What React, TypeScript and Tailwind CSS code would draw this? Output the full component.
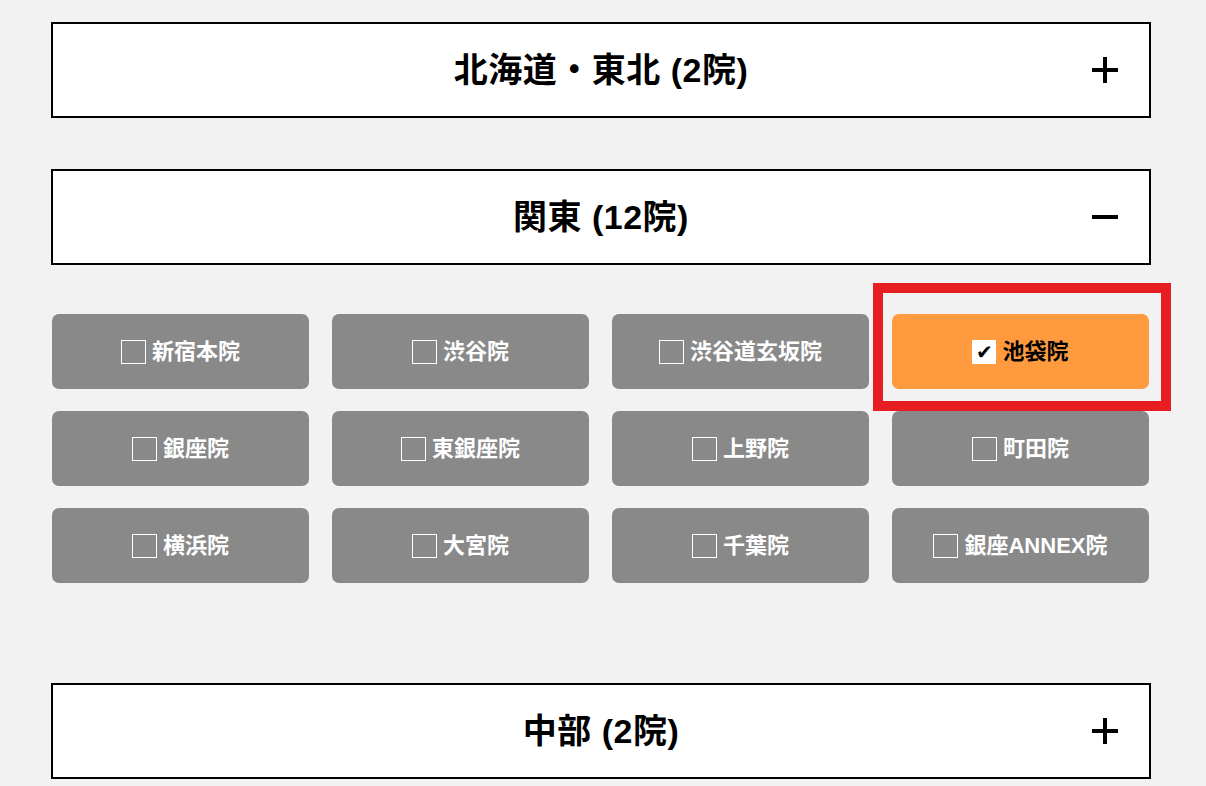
import React from "react";

type Region = {
  id: string;
  title: string;
  open: boolean;
  clinics: string[];
};

const regions: Region[] = [
  { id: "hokkaido", title: "北海道・東北 (2院)", open: false, clinics: [] },
  {
    id: "kanto",
    title: "関東 (12院)",
    open: true,
    clinics: [
      "新宿本院",
      "渋谷院",
      "渋谷道玄坂院",
      "池袋院",
      "銀座院",
      "東銀座院",
      "上野院",
      "町田院",
      "横浜院",
      "大宮院",
      "千葉院",
      "銀座ANNEX院",
    ],
  },
  { id: "chubu", title: "中部 (2院)", open: false, clinics: [] },
];

const FONT = { fontFamily: '"Liberation Sans", "Noto Sans CJK JP", sans-serif' };

function ToggleIcon({ open }: { open: boolean }) {
  return (
    <svg width="26" height="26" viewBox="0 0 26 26" className="justify-self-end mr-[31px]">
      <rect x="0" y="11" width="26" height="4" fill="#000" />
      {!open && <rect x="11" y="0" width="4" height="26" fill="#000" />}
    </svg>
  );
}

function ClinicButton({ name, checked }: { name: string; checked: boolean }) {
  return (
    <div className="relative">
      <button
        className={
          checked
            ? "w-full h-[75px] rounded-[7px] bg-[#ff9a3e] flex items-center justify-center gap-[6px] text-black"
            : "w-full h-[75px] rounded-[7px] bg-[#898989] flex items-center justify-center gap-[6px] text-white"
        }
      >
        {checked ? (
          <span className="w-[24px] h-[24px] bg-white flex items-center justify-center">
            <span className="text-[20px] leading-none text-black" style={{ fontFamily: '"DejaVu Sans", sans-serif' }}>
              ✔
            </span>
          </span>
        ) : (
          <span className="w-[25px] h-[24px] border border-white" />
        )}
        <span className="text-[22px] font-bold leading-none" style={FONT}>
          {name}
        </span>
      </button>
      {checked && (
        <div className="absolute -left-[19px] -top-[31px] w-[298px] h-[128px] border-[10px] border-[#e61e21] pointer-events-none" />
      )}
    </div>
  );
}

export default function App() {
  return (
    <div className="min-h-[786px] bg-[#f2f2f2] pt-[22px]">
      <div className="w-[1100px] ml-[51px] flex flex-col">
        {regions.map((region, i) => (
          <div key={region.id} className={i > 0 ? (region.open ? "mt-[51px]" : "mt-[100px]") : ""}>
            <div className="h-[96px] bg-white border-2 border-black grid grid-cols-[1fr_auto_1fr] items-center">
              <div />
              <h2 className="text-[34px] font-bold text-black tracking-[0.5px] leading-none" style={FONT}>
                {region.title}
              </h2>
              <ToggleIcon open={region.open} />
            </div>
            {region.open && (
              <div className="mt-[49px] ml-px w-[1097px] grid grid-cols-4 gap-x-[23px] gap-y-[22px]">
                {region.clinics.map((c) => (
                  <ClinicButton key={c} name={c} checked={c === "池袋院"} />
                ))}
              </div>
            )}
          </div>
        ))}
      </div>
    </div>
  );
}
